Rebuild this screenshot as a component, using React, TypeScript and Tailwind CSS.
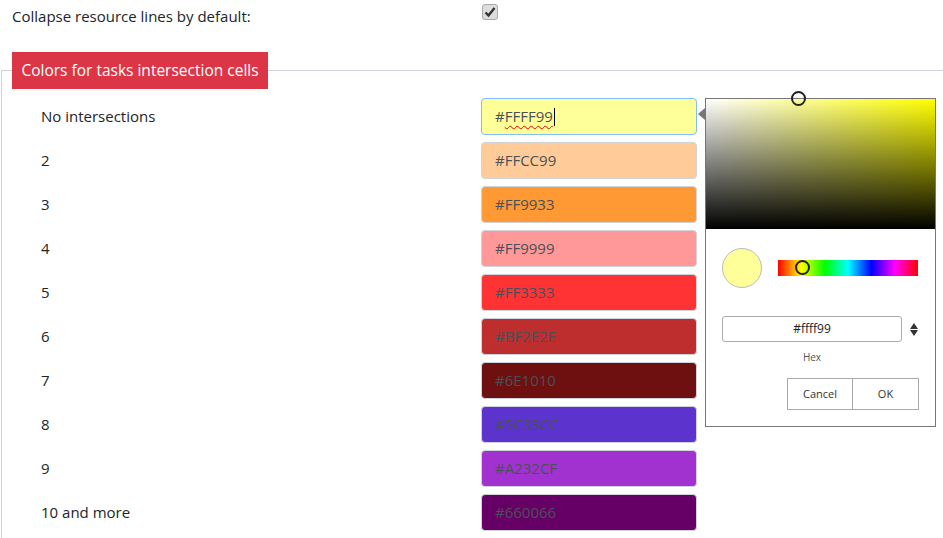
import React from "react";

const rows: { label: string; color: string }[] = [
  { label: "No intersections", color: "#FFFF99" },
  { label: "2", color: "#FFCC99" },
  { label: "3", color: "#FF9933" },
  { label: "4", color: "#FF9999" },
  { label: "5", color: "#FF3333" },
  { label: "6", color: "#BF2E2E" },
  { label: "7", color: "#6E1010" },
  { label: "8", color: "#5C33CC" },
  { label: "9", color: "#A232CF" },
  { label: "10 and more", color: "#660066" },
];

function ColorInput({ color, focused }: { color: string; focused?: boolean }) {
  return (
    <div
      className={`h-[37px] w-[216px] rounded-[4px] border flex items-center pl-[13px] text-[15px] text-[#495057] ${
        focused ? "border-[#80bdff]" : "border-[#ced4da]"
      }`}
      style={{ backgroundColor: color }}
    >
      {focused ? (
        <>
          <span>#</span>
          <span className="underline decoration-wavy decoration-[#e00] decoration-1 underline-offset-[3px]">FFFF99</span>
          <span className="ml-[1px] inline-block h-[18px] w-px bg-black" />
        </>
      ) : (
        <span>{color}</span>
      )}
    </div>
  );
}

function Picker() {
  return (
    <div className="absolute left-[705px] top-[98px] w-[231px] h-[329px] border border-[#777] bg-white font-['Open_Sans',sans-serif]">
      <div className="absolute -left-[8px] top-[9px] w-0 h-0 border-y-[6px] border-y-transparent border-r-[7px] border-r-[#777]" />
      <div className="relative h-[130px] w-full bg-[linear-gradient(to_top,#000,transparent),linear-gradient(to_right,#fff,#ff0)]">
        <div className="absolute left-[85px] -top-[8px] w-[15px] h-[15px] rounded-full border-2 border-[#222]" />
      </div>
      <div className="flex items-center pl-[16px] pt-[19px]">
        <div className="w-[40px] h-[40px] rounded-full bg-[#ffff99] border border-[#bbb]" />
        <div className="relative ml-[16px] w-[140px] h-[16px] bg-[linear-gradient(to_right,#f00,#ff0,#0f0,#0ff,#00f,#f0f,#f00)]">
          <div className="absolute left-[17px] -top-[0px] w-[15px] h-[15px] rounded-full border-2 border-[#222]" />
        </div>
      </div>
      <div className="flex items-center pl-[16px] pt-[28px]">
        <div className="w-[180px] h-[26px] rounded-[3px] border border-[#aaa] flex items-center justify-center text-[12px] text-[#222]">
          #ffff99
        </div>
        <div className="ml-[8px] flex flex-col items-center gap-[1px]">
          <div className="w-0 h-0 border-x-[4px] border-x-transparent border-b-[6px] border-b-[#333]" />
          <div className="w-0 h-0 border-x-[4px] border-x-transparent border-t-[6px] border-t-[#333]" />
        </div>
      </div>
      <div className="pl-[16px] w-[196px] text-center text-[10px] text-[#555] pt-[8px] leading-[14px]">Hex</div>
      <div className="flex justify-end pr-[16px] pt-[14px]">
        <div className="w-[66px] h-[32px] border border-[#aaa] flex items-center justify-center text-[11px] text-[#333]">Cancel</div>
        <div className="w-[66px] h-[32px] border border-[#aaa] border-l-0 flex items-center justify-center text-[11px] text-[#333]">OK</div>
      </div>
    </div>
  );
}

export default function App() {
  return (
    <div className="relative w-[943px] h-[538px] overflow-hidden bg-white font-['Open_Sans',sans-serif] text-[#212529]">
      <div className="flex items-center h-[32px] pl-[12px]">
        <div className="w-[470px] text-[15px]">Collapse resource lines by default:</div>
        <div className="w-[16px] h-[16px] rounded-[3px] border border-[#aaa] bg-[#ddd] flex items-center justify-center mb-[8px]">
          <svg width="12" height="12" viewBox="0 0 12 12">
            <path d="M1.5 6.5 L4.5 9.5 L10.5 2" fill="none" stroke="#333" strokeWidth="2.4" />
          </svg>
        </div>
      </div>
      <div className="mt-[38px] ml-[1px] border-t border-l border-[#ced4da] h-[500px]">
        <div className="-mt-[19px] ml-[10px] w-[256px] h-[37px] bg-[#dc3545] text-white text-[15.5px] flex items-center justify-center">
          Colors for tasks intersection cells
        </div>
        <div className="flex flex-col gap-[7px] mt-[9px]">
          {rows.map((r, i) => (
            <div key={r.label} className="flex items-center">
              <div className="w-[479px] pl-[39px] text-[15px]">{r.label}</div>
              <ColorInput color={r.color} focused={i === 0} />
            </div>
          ))}
        </div>
      </div>
      <Picker />
    </div>
  );
}
